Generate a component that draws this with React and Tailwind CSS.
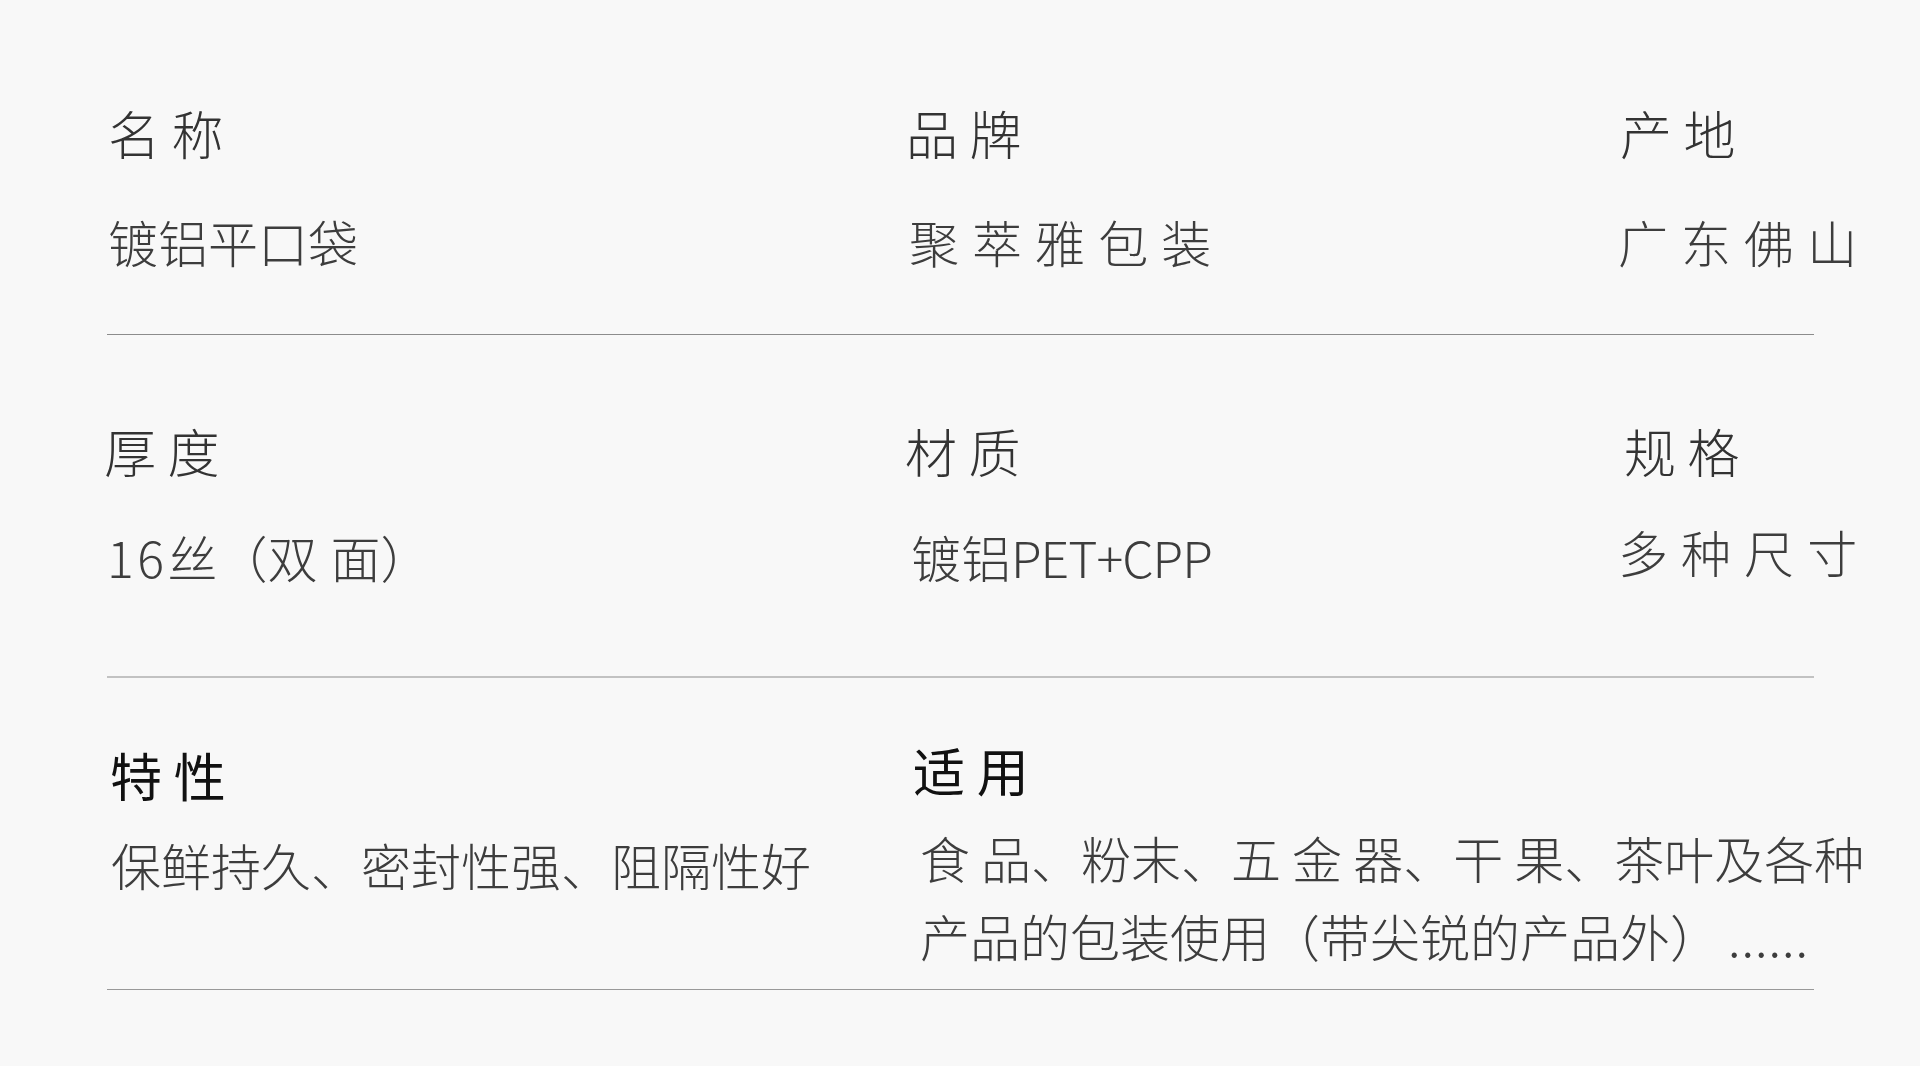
import React from "react";

const rows = [
  {
    cells: [
      { label: "名 称", value: "镀铝平口袋", lx: "ml-[1px]", vx: "ml-[1px]" },
      { label: "品 牌", value: "聚 萃 雅 包 装", lx: "ml-0", vx: "ml-[3px]" },
      { label: "产 地", value: "广 东 佛 山", lx: "ml-[2px]", vx: "ml-0" },
    ],
  },
  {
    cells: [
      {
        label: "厚 度",
        value: (
          <>
            <span className="tracking-[3.5px]">16</span>丝（双 面）
          </>
        ),
        lx: "-ml-[3px]",
        vx: "ml-0",
      },
      {
        label: "材 质",
        value: (
          <>
            镀铝<span className="tracking-[-1px]">PET+CPP</span>
          </>
        ),
        lx: "-ml-[1px]",
        vx: "ml-[5px]",
      },
      { label: "规 格", value: "多 种 尺 寸", lx: "ml-[6px]", vx: "ml-0" },
    ],
  },
];

const Cell = ({ label, value, lx, vx, valueTop }) => (
  <div className="flex flex-col">
    <div className={`text-[52px] leading-[52px] font-light text-[#333] whitespace-nowrap ${lx}`}>{label}</div>
    <div
      className={`${valueTop} text-[50px] leading-[50px] font-extralight text-[#3d3d3d] whitespace-nowrap [word-spacing:2px] ${vx}`}
    >
      {value}
    </div>
  </div>
);

export default function App() {
  return (
    <div className="min-h-screen bg-[#f8f8f8] pl-[107px] pr-[106px] pt-[107px] font-['Noto_Sans_CJK_SC',sans-serif] [text-spacing-trim:space-all] overflow-hidden">
      {/* 第一行 */}
      <div className="flex">
        <div className="w-[799px] shrink-0">
          <Cell {...rows[0].cells[0]} valueTop="mt-[57px]" />
        </div>
        <div className="w-[712px] shrink-0">
          <Cell {...rows[0].cells[1]} valueTop="mt-[57px]" />
        </div>
        <div className="flex-1">
          <Cell {...rows[0].cells[2]} valueTop="mt-[57px]" />
        </div>
      </div>
      <div className="mt-[68px] h-px bg-[#8c8c8c]" />

      {/* 第二行 */}
      <div className="mt-[90px] flex">
        <div className="w-[799px] shrink-0">
          <Cell {...rows[1].cells[0]} valueTop="mt-[54px]" />
        </div>
        <div className="w-[712px] shrink-0">
          <Cell {...rows[1].cells[1]} valueTop="mt-[54px]" />
        </div>
        <div className="flex-1">
          <Cell {...rows[1].cells[2]} valueTop="mt-[49px]" />
        </div>
      </div>
      <div className="mt-[95px] h-[2px] bg-[#c2c2c2]" />

      {/* 第三行 */}
      <div className="mt-[66px] flex">
        <div className="w-[799px] shrink-0 flex flex-col pt-[5px]">
          <div className="ml-[3px] text-[52px] leading-[52px] text-[#111]">特 性</div>
          <div className="ml-[4px] mt-[38px] text-[50px] leading-[50px] font-extralight text-[#3d3d3d] whitespace-nowrap">
            保鲜持久、密封性强、阻隔性好
          </div>
        </div>
        <div className="flex-1 flex flex-col">
          <div className="ml-[7px] text-[52px] leading-[52px] text-[#111]">适 用</div>
          <div className="ml-[14px] mt-[22px] w-[960px] shrink-0 text-[50px] leading-[78px] font-extralight text-[#3d3d3d]">
            食 品、粉末、五 金 器、干 果、茶叶及各种产品的包装使用（带尖锐的产品外）<span className="pl-[8px] tracking-[1px]">......</span>
          </div>
        </div>
      </div>
      <div className="mt-[15px] h-px bg-[#999]" />
    </div>
  );
}
